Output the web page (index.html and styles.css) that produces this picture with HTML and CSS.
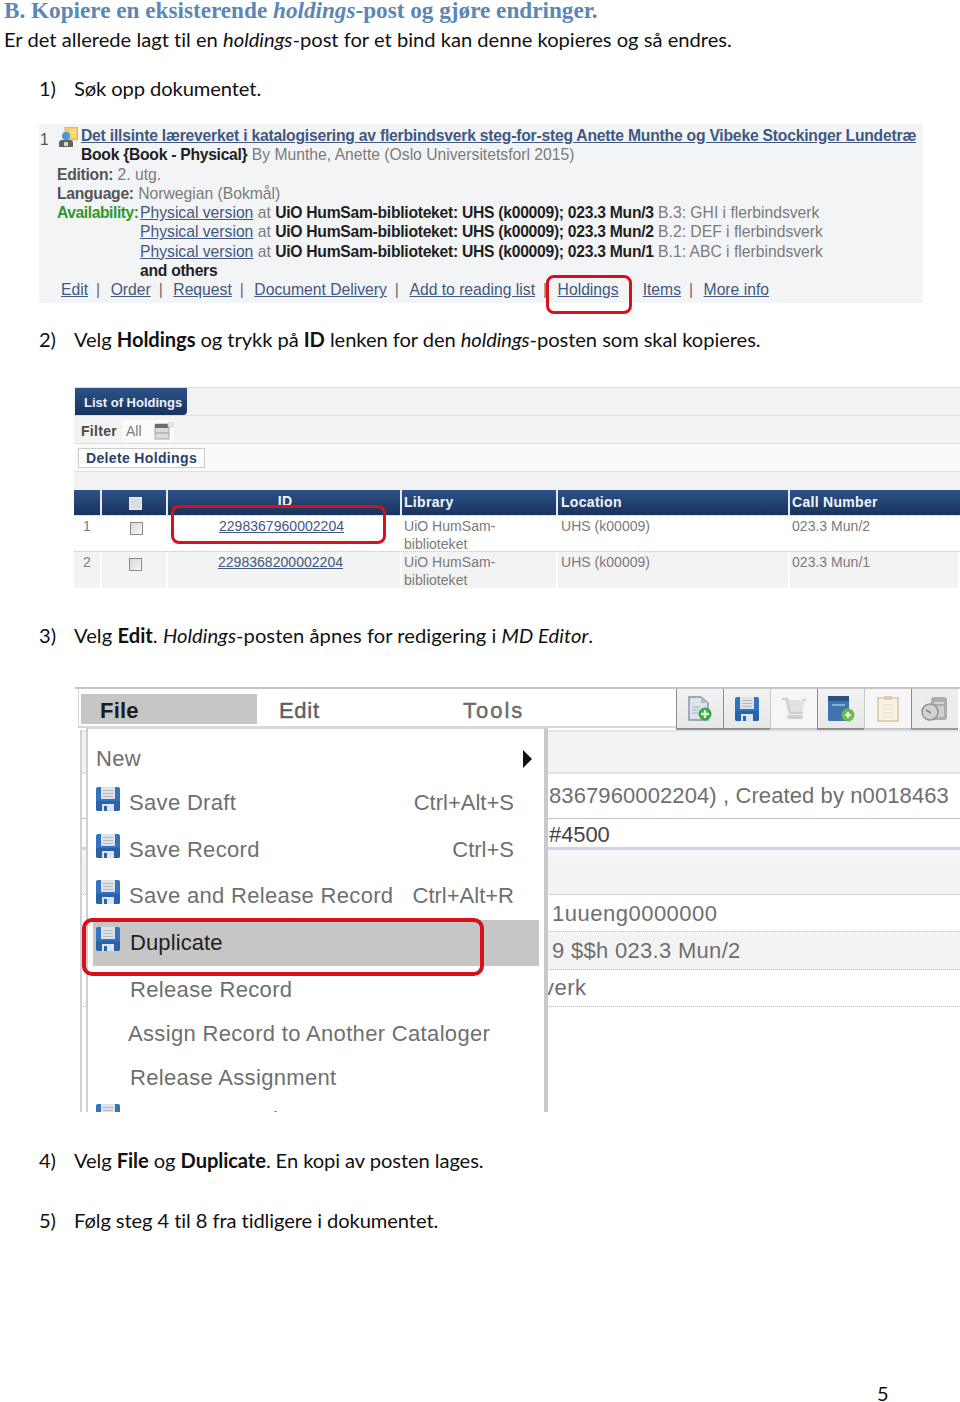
FILE: index.html
```html
<!DOCTYPE html>
<html lang="no">
<head>
<meta charset="utf-8">
<title>Kopiere en eksisterende holdings-post</title>
<link rel="stylesheet" href="styles.css">
</head>
<body>
<svg class="defs" width="0" height="0" aria-hidden="true">
  <defs>
    <symbol id="floppy" viewBox="0 0 24 24">
      <path d="M0 2q0-2 2-2h20q2 0 2 2v20q0 2-2 2H2q-2 0-2-2z" fill="#3273bd"/>
      <path d="M0 14h24v8q0 2-2 2H2q-2 0-2-2z" fill="#2a62a8"/>
      <rect x="5" y="0" width="14" height="12" fill="#dfe2e8"/>
      <path d="M7 3.500h10M7 6.500h10M7 9.500h10" stroke="#b4b8c0" stroke-width="1"/>
      <rect x="6" y="17" width="12" height="7" fill="#dbe3ee"/>
      <rect x="8" y="19" width="3" height="5" fill="#2a62a8"/>
    </symbol>
  </defs>
</svg>
<main class="page">
  <h1 class="title">B. Kopiere en eksisterende <em>holdings</em>-post og gjøre endringer.</h1>
  <p class="intro">Er det allerede lagt til en <em>holdings</em>-post for et bind kan denne kopieres og så endres.</p>

  <p class="step step-1"><span class="num">1)</span><span>Søk opp dokumentet.</span></p>

  <section class="search">
    <div class="hit-head">
      <span class="hit-no">1</span>
      <svg class="hit-icon" viewBox="0 0 20 20" width="20" height="20" aria-hidden="true">
        <rect x="7" y="0" width="12.500" height="13" fill="#f4cb62" stroke="#d2a53c" stroke-width=".7"/>
        <path d="M12 3h6M12 6h6M13 9h5" stroke="#fff3c8" stroke-width="1"/>
        <circle cx="8" cy="9" r="4" fill="#4f96d8"/>
        <path d="M1 20v-4q0-3 3-3h8q3 0 3 3v4z" fill="#62625e"/>
        <rect x="6" y="15" width="4" height="4" fill="#d9d5c4"/>
      </svg>
      <div class="hit-title">
        <a class="title-link">Det illsinte læreverket i katalogisering av flerbindsverk steg-for-steg Anette Munthe og Vibeke Stockinger Lundetræ</a>
        <div><b>Book {Book - Physical}</b> By Munthe, Anette (Oslo Universitetsforl 2015)</div>
      </div>
    </div>
    <div class="hit-meta"><b>Edition:</b> 2. utg.</div>
    <div class="hit-meta"><b>Language:</b> Norwegian (Bokmål)</div>
    <div class="avail">
      <b class="avail-label">Availability:</b>
      <div>
        <div><a>Physical version</a> at <b>UiO HumSam-biblioteket: UHS (k00009); 023.3 Mun/3</b> B.3: GHI i flerbindsverk</div>
        <div><a>Physical version</a> at <b>UiO HumSam-biblioteket: UHS (k00009); 023.3 Mun/2</b> B.2: DEF i flerbindsverk</div>
        <div><a>Physical version</a> at <b>UiO HumSam-biblioteket: UHS (k00009); 023.3 Mun/1</b> B.1: ABC i flerbindsverk</div>
        <div><b>and others</b></div>
      </div>
    </div>
    <nav class="hit-links">
      <a>Edit</a><i>|</i><a>Order</a><i>|</i><a>Request</a><i>|</i><a>Document Delivery</a><i>|</i><a>Add to reading list</a><i>|</i><a class="mark">Holdings</a><i class="blank"></i><a>Items</a><i>|</i><a>More info</a>
    </nav>
    <div class="ring ring-holdings"></div>
  </section>

  <p class="step step-2"><span class="num">2)</span><span>Velg <b>Holdings</b> og trykk på <b>ID</b> lenken for den <em>holdings</em>-posten som skal kopieres.</span></p>

  <section class="holdings">
    <div class="band band-tab"><span class="tab">List of Holdings</span></div>
    <div class="band band-filter">
      <b class="filter-label">Filter</b>
      <span class="filter-box"><span>All</span>
        <svg viewBox="0 0 20 18" width="20" height="18" aria-hidden="true">
          <rect x="1" y="2" width="14" height="15" fill="#dcdcdc" stroke="#9a9a9a" stroke-width=".8"/>
          <rect x="1" y="2" width="14" height="4" fill="#6c6c6c"/>
          <path d="M1 11h14" stroke="#9a9a9a"/>
          <rect x="14" y="0" width="5" height="5" fill="#e8e8e8" stroke="#c4c4c4" stroke-width=".6"/>
        </svg>
      </span>
    </div>
    <div class="band band-action"><span class="btn">Delete Holdings</span></div>
    <div class="band band-gap"></div>
    <div class="grid grid-head">
      <span></span>
      <span class="center"><i class="check head-check"></i></span>
      <span class="center id-head">ID</span>
      <span>Library</span>
      <span>Location</span>
      <span>Call Number</span>
    </div>
    <div class="grid grid-row">
      <span>1</span>
      <span class="center"><i class="check"></i></span>
      <span class="center id-cell"><a>2298367960002204</a></span>
      <span>UiO HumSam-<br>biblioteket</span>
      <span>UHS (k00009)</span>
      <span>023.3 Mun/2</span>
    </div>
    <div class="grid grid-row grid-alt">
      <span>2</span>
      <span class="center"><i class="check"></i></span>
      <span class="center id-cell"><a>2298368200002204</a></span>
      <span>UiO HumSam-<br>biblioteket</span>
      <span>UHS (k00009)</span>
      <span>023.3 Mun/1</span>
    </div>
    <div class="ring ring-id"></div>
  </section>

  <p class="step step-3"><span class="num">3)</span><span>Velg <b>Edit</b>. <em>Holdings</em>-posten åpnes for redigering i <em>MD Editor</em>.</span></p>

  <section class="editor">
    <div class="menubar">
      <div class="menus">
        <span class="menu menu-file">File</span>
        <span class="menu menu-edit">Edit</span>
        <span class="menu menu-tools">Tools</span>
      </div>
      <div class="tools">
        <span class="tool"><svg viewBox="0 0 24 25" width="24" height="25" aria-hidden="true">
          <path d="M1 1h12l7 6v17H1z" fill="#dfe4ec" stroke="#7f92ae" stroke-width="1.400"/>
          <path d="M13 1v6h7z" fill="#aebccf"/>
          <path d="M4 11h8M4 14h6M4 17h6" stroke="#a3b0c2"/>
          <circle cx="17" cy="18" r="6.500" fill="#35a845"/>
          <path d="M17 14v8M13 18h8" stroke="#dff5dc" stroke-width="2.400"/>
        </svg></span>
        <span class="tool"><svg width="24" height="24" aria-hidden="true"><use href="#floppy"/></svg></span>
        <span class="tool tool-off"><svg viewBox="0 0 26 24" width="26" height="24" aria-hidden="true">
          <path d="M4 3h20l-3 13H7z" fill="#e2e2e0"/>
          <path d="M1 2h5l3 14h13" fill="none" stroke="#d0d0cc" stroke-width="2.400"/>
          <path d="M22 2l3 1" stroke="#d0d0cc" stroke-width="2"/>
          <rect x="6" y="18" width="16" height="4" rx="2" fill="#d0d0cc"/>
        </svg></span>
        <span class="tool"><svg viewBox="0 0 28 27" width="28" height="27" aria-hidden="true">
          <rect x="1" y="1" width="21" height="25" rx="1.500" fill="#3f74ad"/>
          <rect x="1" y="1" width="21" height="5" fill="#2a5384"/>
          <path d="M5 10h13" stroke="#a9c3de" stroke-width="1.500"/>
          <circle cx="21" cy="20" r="6.500" fill="#73b84e"/>
          <path d="M21 17v6M18 20h6" stroke="#e9f6df" stroke-width="2.200"/>
        </svg></span>
        <span class="tool tool-off"><svg viewBox="0 0 24 27" width="24" height="27" aria-hidden="true">
          <rect x="2" y="3" width="20" height="23" fill="#f9f1e3" stroke="#dfcdb2" stroke-width="1.800"/>
          <rect x="8" y="1" width="8" height="4" fill="#dccbb2"/>
          <path d="M6 10h12M6 14h12M6 18h12M6 22h12" stroke="#e6dfd0"/>
        </svg></span>
        <span class="tool tool-off tool-last"><svg viewBox="0 0 28 26" width="28" height="26" aria-hidden="true">
          <rect x="10" y="1" width="16" height="23" rx="3" fill="#adadad"/>
          <path d="M13 7h10" stroke="#d4d4d4" stroke-width="2"/>
          <rect x="16" y="10" width="7" height="11" fill="#cecece"/>
          <circle cx="9" cy="16" r="8" fill="#d2d2d2" stroke="#8e8e8e" stroke-width="1.400"/>
          <path d="M5 14l5 3" stroke="#8a8a8a" stroke-width="1.500"/>
        </svg></span>
      </div>
    </div>
    <div class="md">
      <div class="md-row md-top"></div>
      <div class="md-row md-created">8367960002204) , Created by n0018463</div>
      <div class="md-row md-leader">#4500</div>
      <div class="md-row md-empty"></div>
      <div class="md-row md-field">1uueng0000000</div>
      <div class="md-row md-field md-alt">9 $$h 023.3 Mun/2</div>
      <div class="md-row md-field md-clip">verk</div>

      <div class="dropdown">
        <div class="item item-new"><span>New</span><i class="arrow"></i></div>
        <div class="item"><svg class="ic" aria-hidden="true"><use href="#floppy"/></svg><span>Save Draft</span><kbd>Ctrl+Alt+S</kbd></div>
        <div class="item"><svg class="ic" aria-hidden="true"><use href="#floppy"/></svg><span>Save Record</span><kbd>Ctrl+S</kbd></div>
        <div class="item"><svg class="ic" aria-hidden="true"><use href="#floppy"/></svg><span>Save and Release Record</span><kbd>Ctrl+Alt+R</kbd></div>
        <div class="item item-hot"><svg class="ic" aria-hidden="true"><use href="#floppy"/></svg><span>Duplicate</span></div>
        <div class="item item-plain"><span>Release Record</span></div>
        <div class="item item-plain item-assign"><span>Assign Record to Another Cataloger</span></div>
        <div class="item item-plain"><span>Release Assignment</span></div>
        <div class="item item-last"><svg class="ic" aria-hidden="true"><use href="#floppy"/></svg><span>Save as Template</span></div>
      </div>
      <div class="ring ring-dup"></div>
    </div>
  </section>

  <p class="step step-4"><span class="num">4)</span><span>Velg <b>File</b> og <b>Duplicate</b>. En kopi av posten lages.</span></p>
  <p class="step step-5"><span class="num">5)</span><span>Følg steg 4 til 8 fra tidligere i dokumentet.</span></p>

  <footer class="pageno">5</footer>
</main>
</body>
</html>
```

FILE: styles.css
```css
* { box-sizing: border-box; }
html, body { margin: 0; padding: 0; background: #fff; }
.defs { position: absolute; }
.page { position: relative; width: 960px; height: 1402px; overflow: hidden; font-family: Lato, "Noto Sans", sans-serif; font-variant-ligatures: none; color: #111; font-size: 20.150px; line-height: 26px; }

.title { margin: 0 0 0 4px; height: 23px; font: bold 23.200px/20px "Liberation Serif", serif; color: #5b87b5; white-space: nowrap; }
.intro { margin: 3px 0 0 4px; white-space: nowrap; }
.step { margin: 0 0 0 39px; display: flex; white-space: nowrap; }
.num { width: 35px; flex: none; }
.step-1 { margin-top: 23px; letter-spacing: -.1px; }
.step-2 { margin-top: 23px; letter-spacing: -.07px; }
.step-3 { margin-top: 34px; letter-spacing: .05px; }
.step-4 { margin-top: 35px; letter-spacing: -.08px; }
.step-5 { margin-top: 34px; letter-spacing: -.09px; }

.ring { position: absolute; border: 3.500px solid #d7101c; border-radius: 8px; }

/* search result */
.search { position: relative; margin: 23px 0 0 39px; width: 884px; height: 179px; background: #f3f4f6; font: 15.700px/19.300px "Liberation Sans", sans-serif; color: #7b7b7b; padding-top: 2px; white-space: nowrap; }
.search b { color: #1f1f1f; letter-spacing: -.28px; }
.search a { color: #41587f; text-decoration: underline; }
.hit-head { display: flex; }
.hit-no { width: 19px; padding: 4px 0 0 1px; color: #555; }
.hit-icon { flex: none; margin: 1px 3px 0 0; }
.title-link { font-weight: bold; letter-spacing: -.22px; }
.hit-meta { padding-left: 18px; }
.hit-meta b { color: #555; }
.avail { display: flex; padding-left: 18px; }
.avail .avail-label { width: 83px; flex: none; color: #2d9a2d; letter-spacing: -.45px; }
.hit-links { display: flex; padding-left: 22px; color: #6a6a6a; }
.hit-links i { font-style: normal; margin: 0 10.500px 0 8px; }
.hit-links .blank { width: 24px; margin: 0; }
.ring-holdings { left: 507px; top: 151px; width: 86px; height: 39px; }

/* list of holdings */
.holdings { position: relative; margin: 35px 0 0 74px; width: 886px; font: 14px/18px "Liberation Sans", sans-serif; color: #7a7a7a; }
.band { background: #f3f3f3; border-bottom: 1px solid #dfdfdf; display: flex; align-items: center; }
.band-tab { height: 29px; border-top: 1px solid #dcdcdc; align-items: stretch; }
.tab { width: 112px; margin-left: 1px; background: linear-gradient(#2f5288, #17335f); color: #eef2f8; font-weight: bold; font-size: 13px; border-radius: 0 0 4px 0; padding-left: 9px; line-height: 30px; white-space: nowrap; }
.band-filter { height: 28px; padding: 2px 0 0 7px; }
.filter-label { color: #4a4a4a; letter-spacing: .3px; }
.filter-box { display: inline-flex; align-items: center; gap: 12px; height: 22px; margin-left: 5px; padding: 0 0 0 4px; background: #fbfbfb; border-radius: 3px; }
.band-action { height: 28px; background: #fafafa; padding: 1px 0 0 4px; }
.btn { border: 1px solid #ccc; background: #fdfdfd; color: #26416d; font-weight: bold; height: 20px; line-height: 18px; padding: 0 7px; letter-spacing: .35px; }
.band-gap { height: 18px; border: 0; }
.grid { display: grid; grid-template-columns: 28px 66px 234px 156px 232px 170px; }
.grid > span { padding-left: 2px; }
.center { text-align: center; }
.grid-head { height: 25px; color: #f2f5fa; font-weight: bold; line-height: 24px; }
.grid-head > span { background: linear-gradient(#2f5288, #17335f); border-right: 2px solid #e6eaf0; letter-spacing: .3px; }
.grid-head > span:last-child { border-right: 0; }
.grid-head > span:nth-child(5), .grid-row > span:nth-child(5) { padding-left: 3px; }
.grid-head > span:nth-child(6), .grid-row > span:nth-child(6) { padding-left: 2px; }
.id-head { line-height: 22px; }
.grid-row { height: 36px; border-top: 1px dotted #c8c8c8; padding-top: 1px; letter-spacing: .03px; }
.grid-row > span:first-child { padding-left: 9px; }
.grid-row a { color: #41587f; text-decoration: underline; }
.grid .id-cell { padding: 0 7px 0 0; }
.grid-alt { height: 37px; background: #f3f3f3; }
.grid-alt > span { border-right: 2px solid #fff; }
.check { display: inline-block; width: 13px; height: 13px; margin-top: 5px; border: 1px solid #8a8a8a; background: linear-gradient(135deg, #d8d8d8, #f6f6f6); vertical-align: top; }
.head-check { margin-top: 7px; background: #ddd; border-color: #eee; }
.ring-id { left: 97px; top: 118px; width: 215px; height: 39px; }

/* MD editor */
.editor { margin: 39px 0 0 75px; width: 885px; height: 425px; overflow: hidden; font: 22px/26px "Liberation Sans", sans-serif; color: #6f6f6f; border-top: 2px solid #c6c6c6; }
.menubar { display: flex; height: 41px; }
.menus { flex: 1; display: flex; align-items: flex-start; margin-left: 3px; padding: 5px 0 0 2px; border-bottom: 2px solid #d8d8d8; border-left: 1px solid #d4d4d4; height: 39px; }
.menu { height: 30px; line-height: 33px; }
.menu-file { width: 176px; background: #c6c6c6; padding-left: 19px; color: #1c1c1c; font-weight: bold; letter-spacing: .2px; }
.menu-edit { width: 206px; padding-left: 22px; color: #5e5e5e; letter-spacing: .7px; -webkit-text-stroke: .4px #5e5e5e; }
.menu-tools { letter-spacing: 2px; -webkit-text-stroke: .4px #5e5e5e; }
.tools { display: flex; width: 284px; height: 41px; flex: none; }
.tool { width: 47px; display: flex; align-items: center; justify-content: center; background: linear-gradient(#f2f2f2, #e8e8e8); border-left: 1px solid #8c8c8c; border-bottom: 2px solid #8e8e8e; }
.tool-off { background: #f6f6f6; border-left-color: #c8c8c8; border-bottom-color: #c6c6c6; }
.tool-last { background: #ededed; border-left-color: #8c8c8c; border-bottom-color: #9a9a9a; }

.md { position: relative; height: 384px; }
.md::before { content: ""; position: absolute; left: 0; top: 0; bottom: 0; width: 5px; background: #fff; border-right: 2px solid #d2d2d2; }
.md-row { padding-left: 474px; white-space: nowrap; }
.md-top { height: 44px; background: #f3f3f3; border-top: 2px solid #e2e6ee; border-bottom: 2px solid #e2e2e2; }
.md-created { height: 45px; line-height: 44px; border-bottom: 1px solid #c4c4c4; letter-spacing: .1px; }
.md-leader { height: 31px; line-height: 31px; border-bottom: 3px solid #cbd6ea; color: #444; letter-spacing: -.1px; }
.md-empty { height: 45px; background: #f3f3f3; border-top: 7px solid #f8f8fa; border-bottom: 1px dotted #b8b8b8; }
.md-field { height: 37px; line-height: 37px; border-bottom: 1px dotted #b8b8b8; letter-spacing: .5px; padding-left: 477px; }
.md-alt { background: #f3f3f3; height: 38px; letter-spacing: .3px; }
.md-clip { padding-left: 468px; line-height: 36px; }

.dropdown { position: absolute; left: 11px; top: -3px; width: 462px; height: 425px; background: #fff; border-left: 2px solid #d0d0d0; border-right: 4px solid #c9c9c9; border-top: 2px solid #d8d8d8; padding-top: 10px; white-space: nowrap; letter-spacing: .33px; }
.item { display: flex; align-items: center; height: 46.500px; padding: 0 6px 0 8px; }
.item span { margin-left: 9px; }
.item-new { height: 39px; margin-bottom: 2px; }
.item-new span { margin-left: 0; }
.ic { width: 24px; height: 24px; flex: none; margin-top: -8px; }
kbd { margin-left: auto; margin-right: 24px; font: inherit; letter-spacing: 0; }
.arrow { margin-left: auto; margin-right: 6px; border-left: 9px solid #111; border-top: 9px solid transparent; border-bottom: 9px solid transparent; }
.item-hot { background: #c6c6c6; color: #1f1f1f; margin: 0 5px 0 5px; padding-left: 3px; }
.item-hot span { margin-left: 10px; letter-spacing: .1px; }
.item-hot + .item-plain { margin-top: 2px; }
.item-plain { height: 44px; padding-left: 42px; }
.item-plain span { margin-left: 0; }
.item-assign { padding-left: 40px; }
.item-last { margin-top: -3px; }
.item-last span { margin-left: 10px; }
.ring-dup { left: 7px; top: 188px; width: 402px; height: 58px; border-width: 4px; border-radius: 10px; }

.pageno { position: absolute; left: 877px; top: 1380px; font-size: 20px; }
```
